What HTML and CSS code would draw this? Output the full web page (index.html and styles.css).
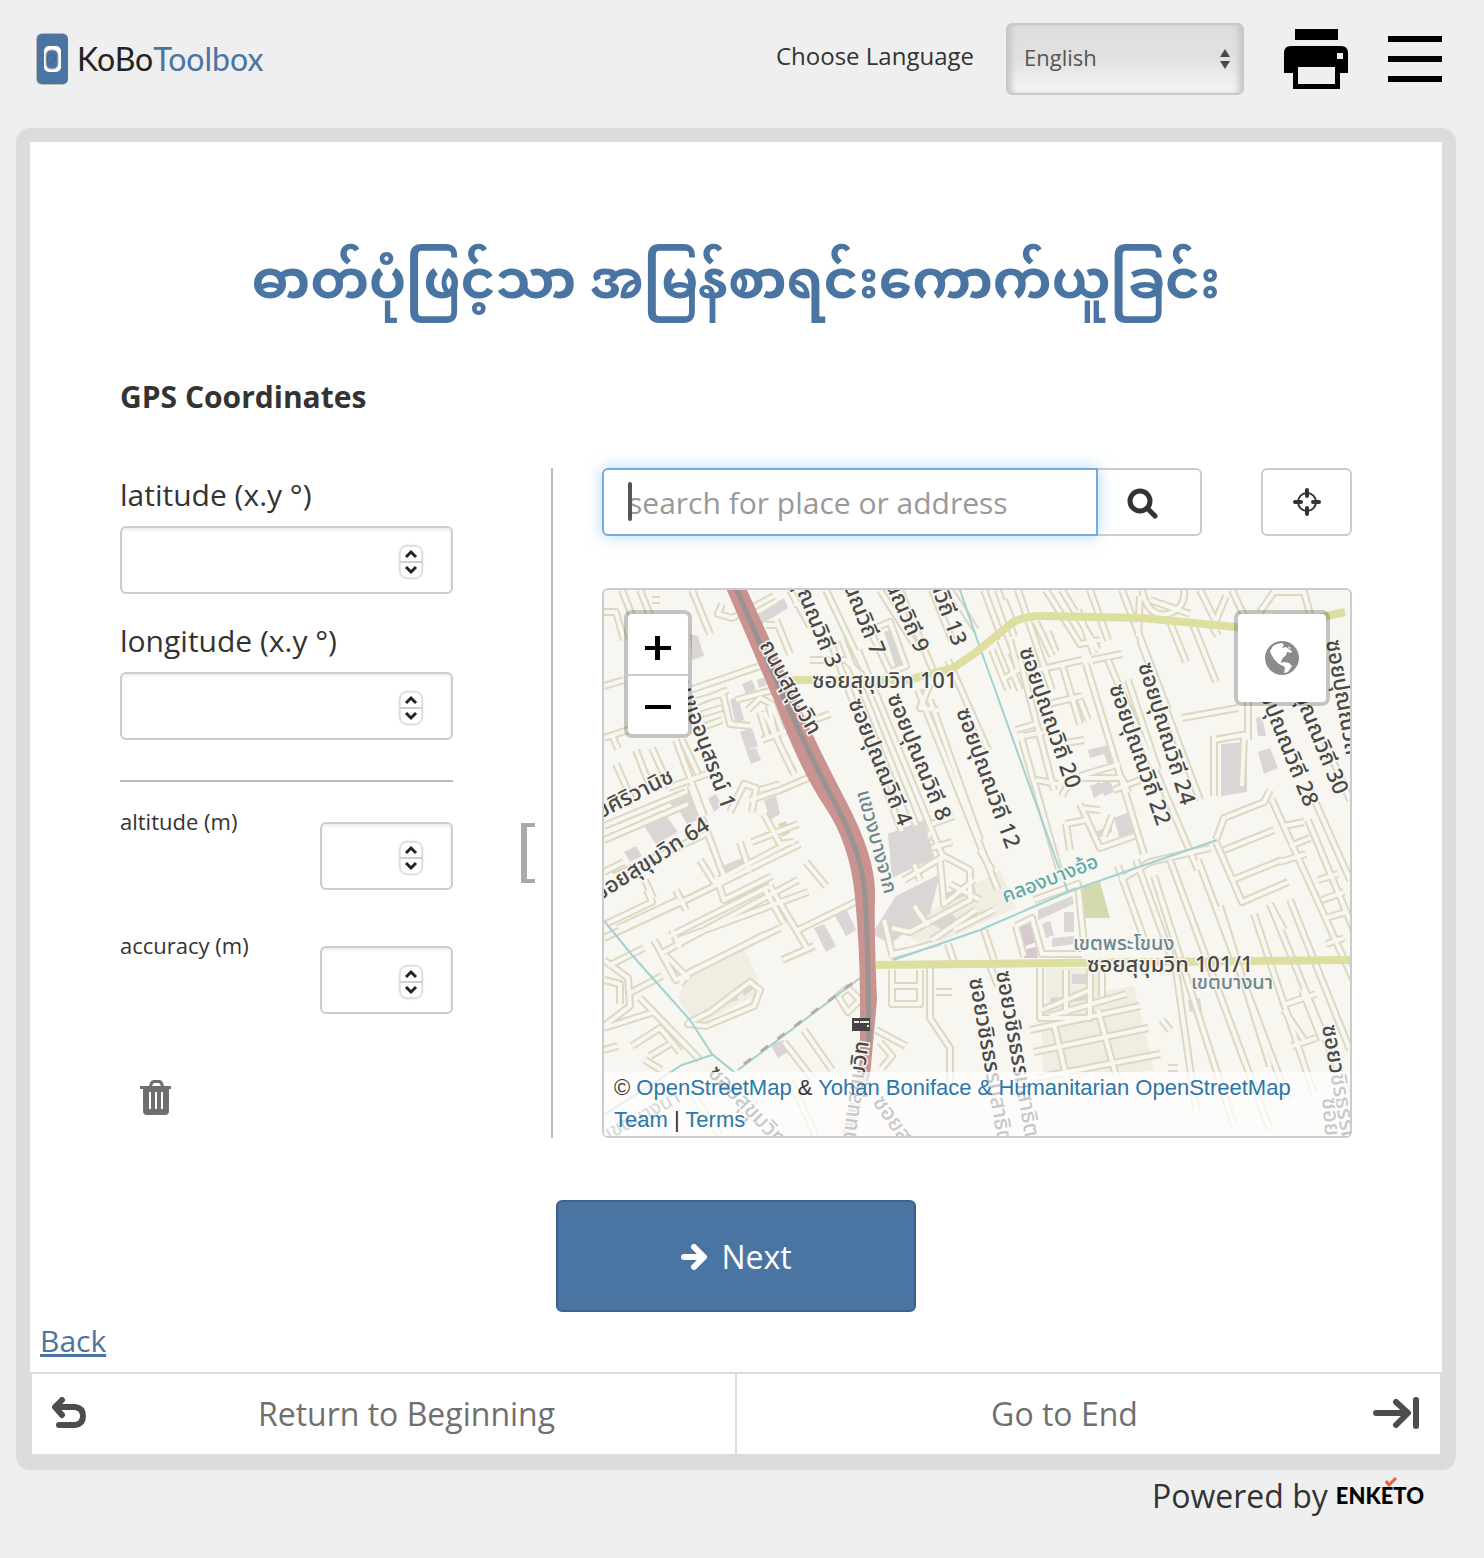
FILE: index.html
```html
<!DOCTYPE html>
<html lang="en">
<head>
<meta charset="utf-8">
<meta name="viewport" content="width=device-width, initial-scale=1">
<title>GPS Coordinates</title>
<link rel="stylesheet" href="styles.css">
</head>
<body>
<header class="top">
  <a class="brand" href="#" aria-label="KoBo Toolbox">
    <svg class="brand-mark" viewBox="0 0 34 54" aria-hidden="true">
      <rect x="1" y="1" width="32" height="52" rx="6" fill="#b9b8b6"/>
      <rect x="2" y="2" width="31" height="50" rx="5" fill="#4a75a3"/>
      <rect x="9" y="14" width="17" height="26" rx="5" fill="#fff"/>
      <rect x="11" y="18" width="12" height="19" rx="5" fill="#4a75a3" stroke="#b5b5b5"/>
      <circle cx="16" cy="27" r="4" fill="none" stroke="#3d648f"/>
    </svg>
    <span class="brand-kobo">KoBo</span><span class="brand-toolbox">Toolbox</span>
  </a>
  <div class="tools">
    <label class="lang-label" for="lang">Choose Language</label>
    <div class="select-wrap">
      <select id="lang" class="lang"><option>English</option></select>
      <svg class="select-arrows" viewBox="0 0 10 20" aria-hidden="true"><path d="M5 0l5 8H0zM5 20l5-8H0z"/></svg>
    </div>
    <button class="icon-btn" type="button" aria-label="Print">
      <svg width="64" height="60" viewBox="0 0 64 60"><path fill-rule="evenodd" d="M11 0h43v11H11zM7 17h50q7 0 7 7v20h-8v16H9V44H0V24q0-7 7-7zM14 38v17h37V38zM53 24v6h6v-6z"/></svg>
    </button>
    <button class="icon-btn" type="button" aria-label="Menu">
      <svg width="54" height="46" viewBox="0 0 54 46"><path d="M0 0h54v6H0zM0 20h54v6H0zM0 40h54v6H0z"/></svg>
    </button>
  </div>
</header>

<main class="page">
  <form class="form">
    <h1 class="title" lang="my">ဓာတ်ပုံဖြင့်သာ အမြန်စာရင်းကောက်ယူခြင်း</h1>
    <h2 class="question">GPS Coordinates</h2>
    <div class="geo">
      <div class="coords">
        <div class="field">
          <label for="lat">latitude (x.y °)</label>
          <div class="num"><input id="lat" type="number"><svg class="spin" viewBox="0 0 24 34"><use href="#spinner"/></svg></div>
        </div>
        <div class="field">
          <label for="lon">longitude (x.y °)</label>
          <div class="num"><input id="lon" type="number"><svg class="spin" viewBox="0 0 24 34"><use href="#spinner"/></svg></div>
        </div>
        <hr class="rule">
        <div class="field-row">
          <label for="alt">altitude (m)</label>
          <div class="num"><input id="alt" type="number"><svg class="spin" viewBox="0 0 24 34"><use href="#spinner"/></svg></div>
        </div>
        <div class="field-row">
          <label for="acc">accuracy (m)</label>
          <div class="num"><input id="acc" type="number"><svg class="spin" viewBox="0 0 24 34"><use href="#spinner"/></svg></div>
        </div>
        <button class="clear" type="button" aria-label="Clear coordinates">
          <svg width="32" height="36" viewBox="0 0 32 36"><path fill-rule="evenodd" d="M9 6l1-3q1-3 4-3h5q3 0 4 3l1 3h7v3h-2v22q0 4-4 4H7q-4 0-4-4V9H0V6zM12 6h9l-1-2q0-1-2-1h-3q-2 0-2 1zM9 12v17h2V12zM15 12v17h2V12zM21 12v17h2V12z"/></svg>
        </button>
        <button class="collapse" type="button" aria-label="Toggle inputs"></button>
      </div>

      <div class="mapside">
        <div class="searchbar">
          <div class="search">
            <input class="search-input" type="text" aria-label="Search" placeholder="search for place or address">
            <span class="caret"></span>
            <button class="search-btn" type="button" aria-label="Search">
              <svg width="32" height="32" viewBox="0 0 32 32" fill="none" stroke="#333" stroke-linecap="round"><circle cx="14" cy="14" r="10" stroke-width="5"/><path d="M22 22l7 7" stroke-width="5"/></svg>
            </button>
          </div>
          <button class="detect" type="button" aria-label="Detect location">
            <svg width="28" height="28" viewBox="0 0 28 28" fill="none" stroke="#333"><circle cx="14" cy="14" r="9" stroke-width="2"/><path d="M14 2v6M14 20v6M2 14h6M20 14h6" stroke-width="4" stroke-linecap="round"/></svg>
          </button>
        </div>

        <div class="map">
          <svg class="tiles" viewBox="604 590 746 546" preserveAspectRatio="xMidYMid slice" aria-hidden="true">
            <defs>
              <g id="spinner">
                <rect x="1" y="1" width="22" height="32" rx="7" fill="#fff" stroke="#d2d2d2"/>
                <path d="M1 17h22" stroke="#cfcfcf" stroke-width="2"/>
                <path d="M7 12l5-5 5 5M7 22l5 5 5-5" fill="none" stroke="#222" stroke-width="3"/>
              </g>
              <g id="roads">
                <path d="M622 590l14 36M640 590l16 40M604 612h12l8 28M692 590l18 44M652 600h8M722 604l-4 10 14 4 16-8 26-14M776 620l14 34M766 625h14M604 686l20-6M604 738l24-8M612 735l6 14M690 690l82-28M628 730l100-40M722 690l8 34 20 2M736 700l52-14M692 702l30-8M696 716l26-8M700 728l22-8M748 710l12-12 12 6 12 32M760 712l8 26M769 706l6 28M682 740l16 34M652 748l18 40M636 750l14 36M616 764l16 36M668 788l50-18M676 740l28 76M604 826l82-34M690 786l36 96M604 840l84-36M730 812l14-28 12 4-4 24M750 800l30-10 28-12M764 814l16 30 14-2M760 790l20-6M764 712l30 62M762 740l68-26M752 842l46-18M604 872l20-10M614 876l92-42M740 842l10 30"/>
                <path d="M604 938l86-40 110-54M606 924l46-22-5-12M653 898l-8-18M618 928l60-28M716 876l8 24 48-24M660 954l138-74M678 940l130-48M670 936l100-50M672 930l8 18M770 886l38 64M798 930l70-34M782 960l32-14M806 862l20 24M700 860l14 22 76-40M676 890l10 20M654 940l22 40 90-46M764 888l20 36M680 984l10-12 90-44M665 955l24 24M604 960l24 18 2 28-26 20M604 980l16 4v20M608 966l36-18M628 994l34-18M640 998l60 62M604 1028l50-16M632 1046l28-18 20 24M650 1056l20-12M645 1060l16 10M604 1050l14-4M690 1022l20-10 40-30 10 8-6 16-48 20-18-2zM838 996l10-8 12 12-12 12zM804 1030l28 40M784 1042l28 36M876 1030l30 16M880 1042l12 14-10 12M756 1078l-12 16M740 1080l20 40M790 1080l26 56M690 1090l30 46"/>
                <path d="M892 970v34h28v-34M892 986h28M930 968v50l20 30v40M936 992h16M794 604h12M790 590l20 36M810 660h36l14 14M826 590l38 80M830 640l90 240M842 640l80 200M858 650l86 210M870 630l20-8 16 44-16 6zM880 590l38 60M900 590l36 88M918 690l80 200M930 700l50 140M930 684l-10 24 18 2M948 660l40 90M950 590l26 40M932 590l20 50M932 824l22-8M930 832l-8 20M924 850l28-8"/>
                <path d="M984 590l24 64M998 590l16 46M1004 600l8 20M1018 590l34 100M1046 590l34 54 20-4M1062 590l36 60M1078 610l16 44M1090 590l18 50M1140 596l-2 40M1142 590q6 28 26 24 18-6 16-24M1150 600l40 14M1122 590l46 120M1200 590l20 40M1232 590l14 30M1260 612l14-20h30l6 22M1036 622l16 34M1048 632l8 20M1170 622l16 40M1192 622l24 60M1210 622l8 14M1038 670l44-10M1062 664l18 60M1040 706l42-10M1092 660l30-6M1086 664l58 190M1108 660l90 210M1128 680l30 90M1140 640l60 160M1020 660l34 130M1000 640l20 50M992 650l16 40M1002 680l16-10-8-30M1016 730l20-6M1024 736l20-4M1022 740l40 140M1036 780l22 4M1060 744l24-4M1080 700l8 20"/>
                <path d="M1062 796q8-20 30-18h30l6 14M1080 776l40-12M1080 808l20 2M1080 804l20 44 34-12M1066 824l20-4M1066 824l4 26M1112 816l-8 20M1114 790l26-10M1216 840l8-22 40-16 6-12M1224 850l50-20M1216 842l26 60 46-20M1232 880l50-20M1182 718l56-10M1214 740l34-6M1248 690v50M1214 736v60M1244 736l-2 50M1272 800l86 190M1284 826l20-4M1290 846l20-8M1280 862l26-8M1308 820l50 120M1318 880l20-6M1322 900l22-8M1326 918l20-6M1326 944l18-6M1310 790l40 90M1324 740l26 60M1340 690l10 20M1226 596l-10 24M1284 930l-14-26M1320 760l10-10"/>
                <path d="M1118 866l30 84M1136 860l40 110 20 140M1154 876l80 250M1170 860l100 270M1198 860l90 240M1120 880l30-18 60-14M1220 906l50 160M1254 914l60 180M1270 904l90 220M1290 900l60 150M1286 1004l30-10M1292 1046l24-8M1284 1010l20 30M1302 990l20 50M1162 1020l8 10M1168 1068h10M1034 900l44-16 6 60M1016 926l16-8 10 36h40M1016 926l8 30M1040 968v50h50v-50M1066 970v44M1042 1010l48-20M1102 968v28M1050 1016l76-22M1030 1030l110-24M1034 1052l114-24M1036 1078l124-24M1054 1024l14 60M1098 1010l18 66M990 966l8 20M984 930l10 30"/>
                <path d="M904 880l40-24 26 14v30l-60 32-18-4M914 906l14 20M884 920l8 34 20-4M940 860l4 44 30-24M950 884l30 16M890 956l50-14M954 930l40-20M932 940l44-30M980 850l12 20M948 944l6 18"/>
              </g>
            </defs>
            <rect x="604" y="590" width="746" height="546" fill="#f7f6f0"/>
            <path fill="#f0ede3" d="M686 978l58-30 14 30-4 18-58 30-18-28zM1040 1004l94-18 20 84-110 14zM1046 968h54v34h-54zM900 930l100-60 16 38-90 40z"/>
            <g fill="#dbd6d6">
              <path d="M758 614l26-16 4 10-26 16zM690 634l8 2 6 20-12 4zM742 684l10-4 4 10-10 4zM757 680l8-3 2 8-8 3zM730 700l8-4 6 24-8 4zM740 732l12-4 6 18-12 4zM746 750l10-2 5 12-10 4zM884 632l10-4 14 34-12 6zM640 820l22-10 16 22-22 12zM668 802l22-10 12 24-14 10-8-14zM708 798l8-4 6 12-8 6zM764 800l12-4 4 18-10 6zM624 852l12-6 6 10-12 6zM888 834l36-14 10 38-42 20zM718 868l24-10 6 12-26 14zM814 928l10-4 12 22-10 6zM834 914l12-6 10 22-10 6zM896 896l44-22-10 40-40 30-18-10zM944 894l28-12 4 10-26 10zM932 924l20-10 6 6-16 10zM770 1044l14-4 4 12-10 6zM694 1018l10-6 3 6-12 6zM710 1008l8-4 2 6-8 4zM724 1000l12-6 2 6-14 4zM742 990l10-6v6l-8 6zM1088 750l24-6 4 18-8 2-4-10-14 4zM1090 786l10-4 4 10-10 6zM1100 784l10-4 4 12-10 4zM1114 818l16-6 6 20-16 8zM1096 832l16-8v8l-14 6zM1221 744l26-2v50l-26 4zM1256 718l6-2 4 20h-8zM1258 752l12-4 8 20-14 6zM1038 910l34-14 2 8-36 16zM1042 924l8-3 4 14-8 3zM1064 912h10v20h-10zM1052 938l22-2v8l-22 3zM1072 974h22v20h-6l-2-10h-14zM1050 998l38-4v6l-38 4zM1188 1000l12-2 2 12-12 2z"/>
            </g>
            <path fill="#d5c9cd" d="M1016 928l14-4 6 18-16 6zM1022 950l14-3 2 11h-14z"/>
            <path fill="#d3dbae" d="M1076 890l24-8 10 36h-30zM778 824l8-3 4 12-8 4z"/>
            <use href="#roads" class="road-case"/>
            <use href="#roads" class="road-fill"/>
            <path fill="#dbd6d6" d="M890 836l34-14 10 34-42 18z"/>
            <path class="canal" d="M960 590l20 58 3 8 75 209 10 27M893 960l87-30 88-38 62-22 87-30M604 921l28 34 58 65 22 34 22 18M738 1070l122-92M712 1055l-30 10-78 50"/>
            <path d="M744 1064l114-85" fill="none" stroke="#b1aeae" stroke-width="3" stroke-dasharray="9 12"/>
            <path class="main-yellow" d="M787 680h120l46-12 22-15 37-30q12-7 30-7l100 2 93 9 60-4 50-11M876 965l474-5"/>
            <path fill="#cb938f" d="M726 588h20Q772 644 794 694T846 801 875 895 877 1000L870 1076 850 1136H842L860 1060 860 1000Q860 950 855 897T825 807 776 705L726 588z"/>
            <path d="M736 588Q760 644 785 700T836 805 865 895 869 1045" fill="none" stroke="#999391" stroke-width="5"/>
            <path fill="#444" d="M852 1018h18v13h-18z"/><path fill="#eee" d="M854 1021h5v2h-5zM860 1021h9v2h-9zM867 1025h2v2h-2z"/>
            <g class="street">
              <text transform="translate(759 645) rotate(61)">ถนนสุขุมวิท</text>
              <text transform="translate(812 688)">ซอยสุขุมวิท 101</text>
              <text class="end" transform="translate(828 669) rotate(68)">ซอยปุณณวิถี 3</text>
              <text class="end" transform="translate(872 657) rotate(68)">ซอยปุณณวิถี 7</text>
              <text class="end" transform="translate(916 654) rotate(66)">ซอยปุณณวิถี 9</text>
              <text class="end" transform="translate(953 647) rotate(70)">ซอยปุณณวิถี 13</text>
              <text transform="translate(848 702) rotate(68)">ซอยปุณณวิถี 4</text>
              <text transform="translate(887 697) rotate(68)">ซอยปุณณวิถี 8</text>
              <text transform="translate(956 711) rotate(70)">ซอยปุณณวิถี 12</text>
              <text transform="translate(1019 650) rotate(71)">ซอยปุณณวิถี 20</text>
              <text transform="translate(1109 687) rotate(71)">ซอยปุณณวิถี 22</text>
              <text transform="translate(1138 665) rotate(73)">ซอยปุณณวิถี 24</text>
              <text class="end" transform="translate(1305 808) rotate(68)">ซอยปุณณวิถี 28</text>
              <text class="end" transform="translate(1335 796) rotate(68)">ซอยปุณณวิถี 30</text>
              <text transform="translate(1326 641) rotate(80)">ซอยปุณณวิถี</text>
              <text class="end" transform="translate(722 810) rotate(70)">รวมขออนุสรณ์ 1</text>
              <text class="end" transform="translate(675 781) rotate(-27)">ซอยศิริวานิช</text>
              <text class="end" transform="translate(711 829) rotate(-33)">ซอยสุขุมวิท 64</text>
              <text transform="translate(1087 972)">ซอยสุขุมวิท 101/1</text>
              <text transform="translate(969 979) rotate(80)">ซอยวชิรธรรมสาธิต</text>
              <text transform="translate(996 972) rotate(80)">ซอยวชิรธรรมสาธิต</text>
              <text class="end" transform="translate(869 1042) rotate(-82)">ถนนสุขุมวิท</text>
              <text transform="translate(707 1074) rotate(46)">ซอยสุขุมวิท</text>
              <text transform="translate(872 1102) rotate(55)">ซอยสุขุมวิท</text>
              <text transform="translate(1322 1026) rotate(80)">ซอยวชิรธรรม</text>
              <text transform="translate(1322 1098) rotate(85)">ซอย</text>
            </g>
            <g class="place">
              <text transform="translate(857 792) rotate(75)">แขวงบางจาก</text>
              <text x="1073" y="950">เขตพระโขนง</text>
              <text x="1191" y="989">เขตบางนา</text>
              <text transform="translate(609 1140) rotate(-28)">เขตบางนา</text>
              <text class="water" transform="translate(1005 903) rotate(-21)">คลองบางอ้อ</text>
            </g>
          </svg>
          <div class="zoomctl">
            <button type="button" aria-label="Zoom in"><svg width="26" height="26" viewBox="0 0 26 26"><path d="M0 11h10V1h5v10h11v4H15v10h-5V15H0z"/></svg></button>
            <button type="button" aria-label="Zoom out"><svg width="26" height="26" viewBox="0 0 26 26"><path d="M0 11h26v4H0z"/></svg></button>
          </div>
          <button class="layers" type="button" aria-label="Layers">
            <svg width="36" height="36" viewBox="0 0 36 36"><circle cx="18" cy="18" r="17" fill="#8b8b8b"/><path fill="#fff" d="M13 4l5-1 2 2-2 3 4-1 4 3 2 1-1 2-4-1-1 3-4 4-1 4 3-1 1 2-2 2-4-2-5-5-3-5-1-3 3-5zM20 22l5 1 3 3-4 6-4 1 1-5-2-3zM24 6l3 2-2 1z"/></svg>
          </button>
          <p class="attribution">© <a href="#">OpenStreetMap</a> &amp; <a href="#">Yohan Boniface &amp; Humanitarian OpenStreetMap Team</a> | <a href="#">Terms</a></p>
        </div>
      </div>
    </div>

    <button class="next" type="button">
      <svg width="28" height="28" viewBox="0 0 28 28" fill="none" stroke="#fff" stroke-linecap="round" stroke-linejoin="round"><path d="M4 15h18" stroke-width="6"/><path d="M14 5l10 10-10 10" stroke-width="6"/></svg>
      Next
    </button>
    <a class="back" href="#">Back</a>
    <nav class="jump">
      <a class="jump-first" href="#">
        <svg width="36" height="32" viewBox="0 0 36 32" fill="none" stroke="#4d4d4d" stroke-width="6" stroke-linecap="round" stroke-linejoin="round"><path d="M10 3L3 10l7 8M4 10h19q8 1 8 9t-8 9H7"/></svg>
        <span>Return to Beginning</span>
      </a>
      <a class="jump-last" href="#">
        <span>Go to End</span>
        <svg width="48" height="32" viewBox="0 0 48 32" fill="none" stroke="#4d4d4d" stroke-linecap="round" stroke-linejoin="round"><path d="M4 16h30M24 5l12 11-12 12" stroke-width="6"/><path d="M44 3v26" stroke-width="6"/></svg>
      </a>
    </nav>
  </form>
</main>

<footer class="powered">
  <span>Powered by</span>
  <a class="enketo" href="#">ENKETO<svg class="tick" viewBox="0 0 14 10" aria-hidden="true"><path d="M2 4l3 4 7-7" fill="none" stroke="#e4633c" stroke-width="3"/></svg></a>
</footer>
</body>
</html>
```
FILE: styles.css
```css
* { box-sizing: border-box; }
body {
  margin: 0;
  background: #efefef;
  color: #333;
  font-family: "Open Sans", "Noto Sans", sans-serif;
  font-size: 30px;
}
button, input, select { font: inherit; color: inherit; }
button { padding: 0; border: 0; background: none; cursor: pointer; }
svg { display: block; flex: none; }

.top {
  display: flex;
  justify-content: space-between;
  align-items: center;
  padding: 23px 42px 33px 35px;
}
.brand {
  display: flex;
  align-items: center;
  color: #222;
  font-family: Lato, sans-serif;
  font-size: 32px;
  line-height: 40px;
  text-decoration: none;
}
.brand-mark { width: 34px; height: 54px; margin-right: 8px; }
.brand-toolbox { color: #4a75a3; }
.tools { display: flex; align-items: center; gap: 40px; }
.lang-label { margin-right: -8px; padding-bottom: 6px; font-size: 24px; line-height: 32px; }
.select-wrap { position: relative; }
.lang {
  display: block;
  width: 238px;
  height: 72px;
  padding: 0 16px 4px;
  border: 2px solid #c8c8c8;
  border-radius: 6px;
  appearance: none;
  background: linear-gradient(#dedede, #e1e1e1 50%, #f5f5f5);
  box-shadow: inset 6px 0 6px -3px #c4c4c4, inset -6px 0 6px -3px #c4c4c4;
  color: #555;
  font-size: 22px;
}
.select-arrows { position: absolute; top: 26px; right: 14px; width: 10px; height: 20px; fill: #4a4a4a; }

.page { padding: 0 28px 0 16px; }
.form {
  border: 14px solid #dcdcdc;
  border-radius: 14px;
  background: #fff;
}
.title {
  margin: 0;
  padding: 96px 90px 59px;
  color: #4a75a3;
  font-family: "Open Sans", "Noto Sans Myanmar", "Noto Sans", sans-serif;
  font-size: 53px;
  line-height: 80px;
  text-align: center;
}
.question { margin: 0; padding: 0 90px 51px; font-size: 30px; line-height: 40px; }
.geo {
  display: grid;
  grid-template-columns: 433fr 750fr;
  gap: 49px;
  padding: 0 90px;
}
.coords {
  position: relative;
  display: flex;
  flex-direction: column;
  padding: 7px 98px 0 0;
  border-right: 2px solid #bbb;
}
.field { display: flex; flex-direction: column; gap: 11px; margin-bottom: 27px; line-height: 40px; }
.num { position: relative; }
.num input {
  display: block;
  width: 100%;
  height: 68px;
  padding: 0 60px 0 24px;
  border: 2px solid #ccc;
  border-radius: 6px;
  background: #fff;
  box-shadow: inset 0 2px 3px rgba(0, 0, 0, .08);
  appearance: textfield;
}
.num input::-webkit-inner-spin-button { appearance: none; }
.spin { position: absolute; top: 19px; right: 30px; width: 24px; height: 34px; filter: drop-shadow(0 0 1px #ccc); }
.rule { width: 100%; height: 2px; margin: 13px 0 23px; border: 0; background: #bbb; }
.field-row { display: flex; justify-content: space-between; margin-bottom: 39px; font-size: 22px; line-height: 32px; }
.field-row .num { width: 40%; margin-top: 17px; }
.clear { align-self: flex-start; margin: 27px 20px 0; fill: #6f6f6f; }
.collapse {
  position: absolute;
  top: 355px;
  right: 16px;
  width: 14px;
  height: 60px;
  border: solid #aaa;
  border-width: 4px 0 4px 6px;
}

.mapside { display: flex; flex-direction: column; gap: 52px; min-width: 0; }
.searchbar { display: flex; justify-content: space-between; gap: 59px; }
.search { position: relative; display: flex; flex: 1; }
.search-input {
  flex: 1;
  min-width: 0;
  height: 68px;
  padding: 0 24px;
  border: 2px solid #72aae4;
  border-radius: 6px 0 0 6px;
  outline: 0;
  box-shadow: 0 0 16px rgba(102, 175, 233, .5);
  caret-color: transparent;
}
.search-input::placeholder { color: #999; opacity: 1; }
.caret { position: absolute; top: 14px; left: 26px; width: 4px; height: 39px; border-radius: 2px; background: #555; }
.search-btn, .detect { display: flex; align-items: center; height: 68px; border: 2px solid #ccc; }
.search-btn { width: 104px; padding: 2px 28px 0; border-left: 0; border-radius: 0 6px 6px 0; }
.detect { justify-content: center; width: 91px; border-radius: 6px; }

.map {
  position: relative;
  height: 550px;
  overflow: hidden;
  border: 2px solid #ccc;
  border-radius: 6px;
}
.tiles { width: 100%; height: 100%; }
.road-case { fill: none; stroke: #ddd8c2; stroke-width: 8px; stroke-linejoin: round; }
.road-fill { fill: none; stroke: #f7f6f0; stroke-width: 4px; stroke-linejoin: round; }
.canal { fill: none; stroke: #a1d1d2; stroke-width: 2px; }
.main-yellow { fill: none; stroke: #dddea0; stroke-width: 8px; }
.street, .place {
  font-family: "Noto Sans Thai", "Noto Sans", sans-serif;
  font-size: 22px;
  font-weight: 500;
  fill: #484848;
  stroke: #f7f6f0;
  stroke-width: 3px;
  paint-order: stroke;
}
.end { text-anchor: end; }
.place { font-size: 20px; fill: #6b868e; }
.water { fill: #5ea9ab; }

.zoomctl, .layers { position: absolute; top: 20px; border: 4px solid rgba(0, 0, 0, .2); border-radius: 8px; background: #fff; background-clip: padding-box; }
.zoomctl { left: 20px; width: 68px; }
.zoomctl button { display: flex; align-items: center; justify-content: center; width: 60px; height: 60px; padding-top: 8px; }
.zoomctl button + button { padding-top: 4px; border-top: 2px solid #ccc; }
.layers { right: 20px; display: flex; align-items: center; justify-content: center; width: 96px; height: 96px; }
.attribution {
  position: absolute;
  right: 0;
  bottom: 0;
  left: 0;
  margin: 0;
  padding: 0 10px;
  background: rgba(255, 255, 255, .7);
  font-family: "Liberation Sans", sans-serif;
  font-size: 22px;
  line-height: 32px;
}
.attribution a { color: #2a77a8; text-decoration: none; }

.next {
  display: flex;
  align-items: center;
  justify-content: center;
  gap: 13px;
  width: 360px;
  height: 112px;
  margin: 62px auto 9px;
  border: 2px solid #3d6289;
  border-radius: 6px;
  background: #4a75a3;
  color: #fff;
  font-size: 32px;
}
.back { display: inline-block; margin: 0 10px 11px; color: #4a75a3; line-height: 40px; vertical-align: top; }
.jump {
  display: grid;
  grid-template-columns: 1fr 1fr;
  gap: 2px;
  padding: 2px;
  background: #dcdcdc;
}
.jump a {
  display: flex;
  align-items: center;
  height: 80px;
  padding: 0 20px 2px;
  background: #fff;
  color: #6f6f6f;
  font-size: 32px;
  text-decoration: none;
}
.jump span { flex: 1; text-align: center; }
.jump-first span { padding-left: 10px; }

.powered {
  display: flex;
  align-items: center;
  justify-content: flex-end;
  gap: 8px;
  padding: 4px 60px 40px;
  font-size: 32px;
  line-height: 44px;
}
.enketo {
  position: relative;
  color: #000;
  font-family: Lato, sans-serif;
  font-size: 22px;
  font-weight: 900;
  text-decoration: none;
}
.tick { position: absolute; top: 3px; right: 26px; width: 14px; height: 10px; }
```
